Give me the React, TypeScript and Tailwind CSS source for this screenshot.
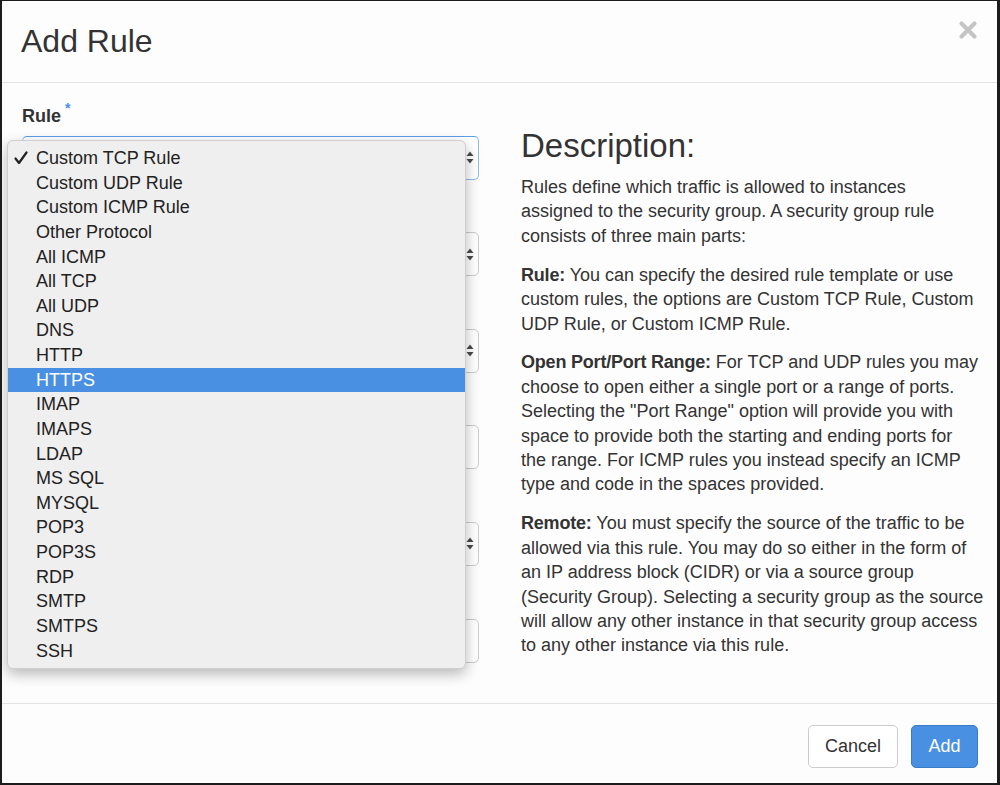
import React from 'react';

const font = { fontFamily: '"Liberation Sans", Arial, Helvetica, sans-serif' };

const ruleOptions = [
    'Custom TCP Rule',
    'Custom UDP Rule',
    'Custom ICMP Rule',
    'Other Protocol',
    'All ICMP',
    'All TCP',
    'All UDP',
    'DNS',
    'HTTP',
    'HTTPS',
    'IMAP',
    'IMAPS',
    'LDAP',
    'MS SQL',
    'MYSQL',
    'POP3',
    'POP3S',
    'RDP',
    'SMTP',
    'SMTPS',
    'SSH',
];

// form rows sitting under the open menu; only the first label shows
const fields = [
    { label: 'Rule', kind: 'select' },
    { label: '', kind: 'select' },
    { label: '', kind: 'select' },
    { label: '', kind: 'input' },
    { label: '', kind: 'select' },
    { label: '', kind: 'input' },
];

// line breaks kept as in the original help text
const help = [
    {
        title: '',
        lines: [
            'Rules define which traffic is allowed to instances',
            'assigned to the security group. A security group rule',
            'consists of three main parts:',
        ],
    },
    {
        title: 'Rule:',
        lines: [
            ' You can specify the desired rule template or use',
            'custom rules, the options are Custom TCP Rule, Custom',
            'UDP Rule, or Custom ICMP Rule.',
        ],
    },
    {
        title: 'Open Port/Port Range:',
        lines: [
            ' For TCP and UDP rules you may',
            'choose to open either a single port or a range of ports.',
            'Selecting the "Port Range" option will provide you with',
            'space to provide both the starting and ending ports for',
            'the range. For ICMP rules you instead specify an ICMP',
            'type and code in the spaces provided.',
        ],
    },
    {
        title: 'Remote:',
        lines: [
            ' You must specify the source of the traffic to be',
            'allowed via this rule. You may do so either in the form of',
            'an IP address block (CIDR) or via a source group',
            '(Security Group). Selecting a security group as the source',
            'will allow any other instance in that security group access',
            'to any other instance via this rule.',
        ],
    },
];

function Arrows() {
    return (
        <svg width="8" height="13" viewBox="0 0 8 13" className="text-[#4a4a4a]">
            <path d="M4 0.5 L7.5 5 L0.5 5 Z" fill="currentColor" />
            <path d="M4 12.5 L7.5 8 L0.5 8 Z" fill="currentColor" />
        </svg>
    );
}

function Field({ label, kind, focused }: { label: string; kind: string; focused?: boolean }) {
    return (
        <div className="mb-[21px]">
            <div className="flex items-start h-[24.6px] text-[18px] leading-[24.6px] font-bold text-[#333] mb-[7px]">
                {label}
                {focused && <span className="ml-[4px] -mt-[6px] text-[14px] leading-[20px] text-[#4a90e2] font-bold">*</span>}
            </div>
            <div
                className={
                    'h-[44px] rounded-[5px] border bg-white flex items-center justify-end pr-[4px] ' +
                    (focused ? 'border-[#8fb8e8] border-t-[#5d9de6]' : 'border-[#cccccc]')
                }
            >
                {kind === 'select' && <Arrows />}
            </div>
        </div>
    );
}

function RuleMenu() {
    return (
        <div className="absolute left-[5px] top-[57px] w-[459px] rounded-[6px] border border-[#cfcfcf] bg-[#efefef] pt-[5px] pb-[5px] shadow-[0_5px_14px_rgba(0,0,0,0.28)]">
            {ruleOptions.map((opt, i) => {
                const active = opt === 'HTTPS';
                return (
                    <div
                        key={opt}
                        className={
                            'relative h-[24.63px] pl-[28px] text-[18px] leading-[24.63px] whitespace-nowrap ' +
                            (active ? 'bg-[#4a90e2] text-white' : 'text-[#222]')
                        }
                    >
                        {i === 0 && (
                            <svg width="14" height="14" viewBox="0 0 14 14" className="absolute left-[6px] top-[5px]">
                                <path d="M1.5 7.5 L5 12 L12.5 1.5" fill="none" stroke="#222" strokeWidth="2.2" strokeLinecap="round" strokeLinejoin="round" />
                            </svg>
                        )}
                        {opt}
                    </div>
                );
            })}
        </div>
    );
}

export default function App() {
    return (
        <div
            style={font}
            className="w-[1000px] h-[785px] flex flex-col bg-[#fdfdfd] border-t border-l-2 border-r-[3px] border-b-2 border-[#1c1c1c] overflow-hidden"
        >
            <header className="h-[82px] flex items-start justify-between border-b border-[#e3e3e3] pl-[19px] pr-[19px]">
                <h1 className="text-[32px] leading-[36px] mt-[22px] text-[#333]">Add Rule</h1>
                <svg width="20" height="20" viewBox="0 0 20 20" className="mt-[19px]">
                    <path d="M3.5 3.5 L16.5 16.5 M16.5 3.5 L3.5 16.5" stroke="#c4c4c4" strokeWidth="4.2" strokeLinecap="round" />
                </svg>
            </header>

            <main className="relative flex-1 px-[20px] pt-[21px]">
                <div className="grid grid-cols-[457px_458px] gap-x-[42px]">
                    <div>
                        {fields.map((f, i) => (
                            <Field key={i} label={f.label} kind={f.kind} focused={i === 0} />
                        ))}
                    </div>
                    <div className="text-[#333] text-[18px] leading-[24.4px]">
                        <h3 className="text-[33px] leading-[36px] mt-[24px] mb-[11px] text-[#333]">Description:</h3>
                        {help.map((p, pi) => (
                            <p key={pi} className={'whitespace-pre ' + (pi < help.length - 1 ? 'mb-[14.5px]' : '')}>
                                {p.lines.map((line, li) => (
                                    <span key={li} className="block">
                                        {li === 0 && p.title && <strong className="tracking-[-0.2px]">{p.title}</strong>}
                                        {line}
                                    </span>
                                ))}
                            </p>
                        ))}
                    </div>
                </div>
                <RuleMenu />
            </main>

            <footer className="h-[80px] border-t border-[#e3e3e3] flex items-start justify-end gap-[13px] pt-[21px] pr-[19px]">
                <button className="h-[43px] w-[90px] rounded-[5px] border border-[#cccccc] bg-white text-[18px] text-[#333]">Cancel</button>
                <button className="h-[43px] w-[67px] rounded-[5px] border border-[#3a7bc8] bg-[#4a90e2] text-[18px] text-white">Add</button>
            </footer>
        </div>
    );
}
